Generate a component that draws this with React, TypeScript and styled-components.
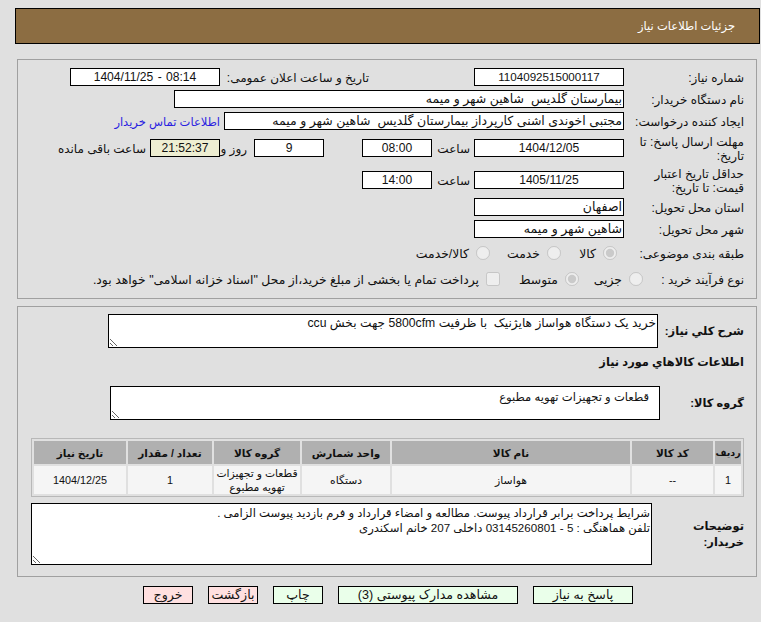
import styled, { createGlobalStyle } from "styled-components";

const GlobalStyle = createGlobalStyle`
  html, body {
    margin: 0;
    padding: 0;
    background: #e0e0e0;
  }
  body {
    direction: rtl;
    font-family: "Liberation Sans", "DejaVu Sans", sans-serif;
    font-size: 12px;
    color: #111;
  }
`;

const Page = styled.div`
  width: 761px;
  height: 622px;
  padding-top: 8px;
  box-sizing: border-box;
  overflow: hidden;
`;

const TitleBar = styled.div`
  height: 36px;
  margin: 0 1px 0 15px;
  box-sizing: border-box;
  border: 1px solid #000;
  background: #8c6d42;
  color: #fff;
  padding-right: 24px;
  display: flex;
  align-items: center;
  font-size: 11.5px;
`;

const Panel = styled.div<{ $h: number; $top: number; $pad: number }>`
  height: ${(p) => p.$h}px;
  margin: ${(p) => p.$top}px 4px 0 17px;
  box-sizing: border-box;
  border: 1px solid #a0a0a0;
  padding: ${(p) => p.$pad}px 12px 0 0;
`;

const Row = styled.div<{ $h?: number }>`
  display: flex;
  align-items: center;
  height: ${(p) => p.$h ?? 18}px;
  margin-bottom: 4px;
`;

const Label = styled.div<{ $w?: number }>`
  flex: none;
  width: ${(p) => p.$w ?? 120}px;
  line-height: 14px;
  box-sizing: border-box;
  padding: 2px 0 0 6px;
`;

const Field = styled.div<{ $w: number; $num?: boolean; $tight?: boolean; $tint?: boolean }>`
  flex: none;
  width: ${(p) => p.$w}px;
  height: 18px;
  box-sizing: border-box;
  border: 1px solid #000;
  background: ${(p) => (p.$tint ? "#eeeed2" : "#fff")};
  line-height: 16px;
  padding: 0 1px;
  direction: ${(p) => (p.$num ? "ltr" : "rtl")};
  text-align: ${(p) => (p.$num ? "center" : "right")};
  font-size: ${(p) => (p.$tight ? "11.6px" : p.$num ? "12.1px" : "12.5px")};
  word-spacing: ${(p) => (p.$num ? "1px" : "0")};
  white-space: pre;
  overflow: hidden;
`;

const Inline = styled.div<{ $w: number; $gap?: number }>`
  flex: none;
  width: ${(p) => p.$w}px;
  box-sizing: border-box;
  padding: 2px ${(p) => p.$gap ?? 4}px 0 0;
  white-space: nowrap;
`;

const Link = styled.a`
  color: #2a1ee0;
  padding: 2px 4px 0 0;
  font-size: 11.5px;
  text-decoration: none;
  white-space: nowrap;
`;

const Option = styled.label<{ $w?: number }>`
  flex: none;
  width: ${(p) => (p.$w ? `${p.$w}px` : "auto")};
  display: flex;
  align-items: center;
  gap: 7px;
  font-size: 12.4px;
  white-space: nowrap;
  input {
    margin: 0;
    width: 14px;
    height: 14px;
  }
`;

const BoldRow = styled.div<{ $h: number; $top?: number; $bottom?: number }>`
  display: flex;
  align-items: center;
  height: ${(p) => p.$h}px;
  margin-top: ${(p) => p.$top ?? 0}px;
  margin-bottom: ${(p) => p.$bottom ?? 0}px;
  font-weight: bold;
  font-size: 11.4px;
`;

const BoldLabel = styled.div<{ $w: number }>`
  flex: none;
  width: ${(p) => p.$w}px;
  line-height: 16px;
`;

const Note = styled.textarea<{ $w: number; $h: number; $pad?: number; $fs?: number }>`
  flex: none;
  display: block;
  width: ${(p) => p.$w}px;
  height: ${(p) => p.$h}px;
  box-sizing: border-box;
  margin: 0;
  border: 1px solid #000;
  border-radius: 0;
  outline: none;
  background: #fff;
  color: #111;
  padding: ${(p) => (p.$pad ? `2px ${p.$pad}px` : "1px")};
  font-family: inherit;
  font-size: ${(p) => p.$fs ?? 11.6}px;
  font-weight: normal;
  line-height: 15px;
  direction: rtl;
`;

const GoodsTable = styled.table`
  width: 712px;
  height: 59px;
  border: 1px solid #b8b8b8;
  border-spacing: 2px;
  table-layout: fixed;
  th {
    background: #b0b0b0;
    height: 23px;
    padding: 0;
    font-size: 10.5px;
    white-space: nowrap;
  }
  th:first-child {
    font-size: 9.5px;
  }
  td {
    background: #f5f5f5;
    padding: 0;
    text-align: center;
    line-height: 14px;
    font-size: 10.8px;
  }
`;

const Buttons = styled.div`
  display: flex;
  margin: 9px 128px 0 0;
  gap: 15px;
`;

const Action = styled.button<{ $w: number; $danger?: boolean }>`
  width: ${(p) => p.$w}px;
  height: 18px;
  box-sizing: border-box;
  padding: 0;
  border: 1px solid #000;
  background: ${(p) => (p.$danger ? "#ffe0e0" : "#eaffea")};
  color: #111;
  font-family: inherit;
  font-size: 12.6px;
  line-height: 16px;
`;

const columns = [
  { title: "ردیف", w: 26 },
  { title: "کد کالا", w: 81 },
  { title: "نام کالا", w: 238 },
  { title: "واحد شمارش", w: 88 },
  { title: "گروه کالا", w: 86 },
  { title: "تعداد / مقدار", w: 84 },
  { title: "تاریخ نیاز", w: 92 },
];

const cells = ["1", "--", "هواساز", "دستگاه", "قطعات و تجهیزات تهویه مطبوع", "1", "1404/12/25"];

const description =
  "شرایط پرداخت برابر قرارداد پیوست. مطالعه و امضاء قرارداد و فرم بازدید پیوست الزامی .\nتلفن هماهنگی : 5 - 03145260801 داخلی 207 خانم اسکندری";

export default function App() {
  return (
    <Page>
      <GlobalStyle />
      <TitleBar>جزئیات اطلاعات نیاز</TitleBar>

      <Panel $h={240} $top={15} $pad={8}>
        <Row>
          <Label>شماره نیاز:</Label>
          <Field $w={150} $num $tight>1104092515000117</Field>
          <Inline $w={254} $gap={105}>تاریخ و ساعت اعلان عمومی:</Inline>
          <Field $w={150} $num>1404/11/25 - 08:14</Field>
        </Row>
        <Row>
          <Label>نام دستگاه خریدار:</Label>
          <Field $w={450}>بیمارستان گلدیس  شاهین شهر و میمه</Field>
        </Row>
        <Row>
          <Label>ایجاد کننده درخواست:</Label>
          <Field $w={400}>مجتبی اخوندی اشنی کارپرداز بیمارستان گلدیس  شاهین شهر و میمه</Field>
          <Link href="#">اطلاعات تماس خریدار</Link>
        </Row>
        <Row $h={28}>
          <Label>مهلت ارسال پاسخ: تا تاریخ:</Label>
          <Field $w={150} $num>1404/12/05</Field>
          <Inline $w={42}>ساعت</Inline>
          <Field $w={70} $num>08:00</Field>
          <Inline $w={38} />
          <Field $w={70} $num>9</Field>
          <Inline $w={34} $gap={7}>روز و</Inline>
          <Field $w={70} $num $tint>21:52:37</Field>
          <Inline $w={100}>ساعت باقی مانده</Inline>
        </Row>
        <Row $h={28}>
          <Label>حداقل تاریخ اعتبار قیمت: تا تاریخ:</Label>
          <Field $w={150} $num>1405/11/25</Field>
          <Inline $w={42}>ساعت</Inline>
          <Field $w={70} $num>14:00</Field>
        </Row>
        <Row>
          <Label>استان محل تحویل:</Label>
          <Field $w={150}>اصفهان</Field>
        </Row>
        <Row>
          <Label>شهر محل تحویل:</Label>
          <Field $w={150}>شاهین شهر و میمه</Field>
        </Row>
        <Row $h={22}>
          <Label $w={127}>طبقه بندی موضوعی:</Label>
          <Option $w={56}><input type="radio" name="kind" disabled defaultChecked />کالا</Option>
          <Option $w={71}><input type="radio" name="kind" disabled />خدمت</Option>
          <Option><input type="radio" name="kind" disabled />کالا/خدمت</Option>
        </Row>
        <Row $h={22}>
          <Label $w={101}>نوع فرآیند خرید :</Label>
          <Option $w={64}><input type="radio" name="proc" disabled />جزیی</Option>
          <Option $w={79}><input type="radio" name="proc" disabled defaultChecked />متوسط</Option>
          <Option><input type="checkbox" disabled />پرداخت تمام یا بخشی از مبلغ خرید،از محل "اسناد خزانه اسلامی" خواهد بود.</Option>
        </Row>
      </Panel>

      <Panel $h={271} $top={7} $pad={7}>
        <BoldRow $h={34}>
          <BoldLabel $w={86}>شرح کلي نیاز:</BoldLabel>
          <Note $w={550} $h={34} $fs={12.2} readOnly defaultValue="خرید یک دستگاه هواساز هایژنیک  با ظرفیت 5800cfm جهت بخش ccu" />
        </BoldRow>
        <BoldRow $h={28}>اطلاعات کالاهاي مورد نیاز</BoldRow>
        <BoldRow $h={34} $top={10} $bottom={18}>
          <BoldLabel $w={84}>گروه کالا:</BoldLabel>
          <Note $w={550} $h={34} $pad={10} readOnly defaultValue="قطعات و تجهیزات تهویه مطبوع" />
        </BoldRow>
        <GoodsTable>
          <colgroup>
            {columns.map((c) => (
              <col key={c.title} style={{ width: c.w }} />
            ))}
          </colgroup>
          <thead>
            <tr>
              {columns.map((c) => (
                <th key={c.title}>{c.title}</th>
              ))}
            </tr>
          </thead>
          <tbody>
            <tr>
              {cells.map((c, i) => (
                <td key={i}>{c}</td>
              ))}
            </tr>
          </tbody>
        </GoodsTable>
        <BoldRow $h={62} $top={6}>
          <BoldLabel $w={92}>توضیحات<br />خریدار:</BoldLabel>
          <Note $w={621} $h={62} readOnly defaultValue={description} />
        </BoldRow>
      </Panel>

      <Buttons>
        <Action $w={100}>پاسخ به نیاز</Action>
        <Action $w={180}>مشاهده مدارک پیوستی (3)</Action>
        <Action $w={50}>چاپ</Action>
        <Action $w={50} $danger>بازگشت</Action>
        <Action $w={50} $danger>خروج</Action>
      </Buttons>
    </Page>
  );
}
